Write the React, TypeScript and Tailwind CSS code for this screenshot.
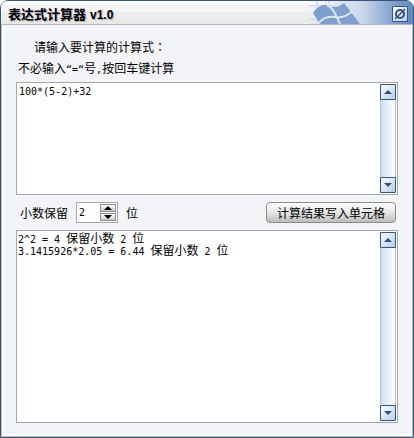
import { useState } from "react";
import type { ReactNode } from "react";

const RESULTS = [
  { expression: "2^2 = 4", digits: 2 },
  { expression: "3.1415926*2.05 = 6.44", digits: 2 },
];

const Mono = ({ children }: { children: ReactNode }) => (
  <span className="font-['DejaVu_Sans_Mono',monospace] text-[10px] whitespace-pre">
    {children}
  </span>
);

const Arrow = ({ down = false }: { down?: boolean }) => (
  <svg width="8" height="4" viewBox="0 0 8 4" fill="currentColor" aria-hidden="true">
    <path d={down ? "M0 0H8L4 4Z" : "M0 4H8L4 0Z"} />
  </svg>
);

const ScrollBar = ({ label }: { label: string }) => (
  <div className="flex w-4 shrink-0 flex-col justify-between border-x border-[#bcbfc4] bg-linear-to-r from-[#cfdff5] to-white">
    <button
      type="button"
      aria-label={`${label}向上滚动`}
      className="-mx-px flex h-4 items-center justify-center rounded-[1px] border border-[#36547c] bg-linear-to-br from-white to-[#b5cbe9] text-[#33517a]"
    >
      <Arrow />
    </button>
    <button
      type="button"
      aria-label={`${label}向下滚动`}
      className="-mx-px flex h-4 items-center justify-center rounded-[1px] border border-[#36547c] bg-linear-to-br from-white to-[#b5cbe9] text-[#33517a]"
    >
      <Arrow down />
    </button>
  </div>
);

const TitleBar = () => (
  <header className="relative flex h-6 shrink-0 items-center justify-between overflow-hidden rounded-t-md border-b border-[#b5b5b5] bg-[linear-gradient(#ffffff_0_4px,#f5f5f7_4px_11px,#ededee_11px_18px,#e8e8e5_18px)] pt-0.5 pr-[5px] pl-[7px]">
    <svg
      width="112"
      height="24"
      viewBox="301 1 112 24"
      className="absolute top-0 right-0"
      aria-hidden="true"
    >
      <defs>
        <linearGradient id="sky" x1="0" x2="1" y1="0" y2="0">
          <stop offset="0" stopColor="#eeeff2" stopOpacity="0" />
          <stop offset="0.3" stopColor="#e6eaf2" />
          <stop offset="0.55" stopColor="#cbd7ea" />
          <stop offset="0.8" stopColor="#86a4d0" />
          <stop offset="1" stopColor="#6189be" />
        </linearGradient>
      </defs>
      <rect x="301" y="1" width="112" height="24" fill="url(#sky)" />
      <path
        d="M309 6H352M309 19H352M317 1V24M329 1V24M341 1V24M352 1V24"
        stroke="#d6e0f0"
        strokeWidth="2"
        fill="none"
      />
      <path
        d="M313 13C317 7 322 4 327 5C333 8 339 8 344 3L360 24H320Z"
        fill="#7f9fcd"
      />
      <path
        d="M318 24C323 17 329 16 335 17C342 19 348 15 353 11M327 5C334 8 336 16 340 24"
        stroke="#dfe6f1"
        strokeWidth="2"
        fill="none"
      />
    </svg>
    <h1 className="flex items-baseline gap-1 font-bold text-black [text-shadow:1px_1px_1px_#aaaabb]">
      <span className="text-[13px]">表达式计算器</span>
      <span className="font-['Liberation_Sans',sans-serif] text-xs">v1.0</span>
    </h1>
    <button
      type="button"
      aria-label="关闭"
      className="relative flex size-4 items-center justify-center rounded-[1px] border border-[#36547c] bg-linear-to-br from-white to-[#b5cbe9] text-[#33517a]"
    >
      <svg width="12" height="12" viewBox="0 0 12 12" fill="none" stroke="currentColor" aria-hidden="true">
        <circle cx="6" cy="6" r="4" strokeWidth="2" />
        <path d="M1 11L11 1" strokeWidth="1.5" />
      </svg>
    </button>
  </header>
);

export default function App() {
  const [expression, setExpression] = useState("100*(5-2)+32");
  const [digits, setDigits] = useState(2);

  return (
    <div className="min-h-screen bg-white font-['Noto_Sans_CJK_SC',sans-serif] text-xs text-black">
      <main className="flex min-h-screen flex-col rounded-t-lg border border-[#36547c] bg-white">
        <TitleBar />
        <div className="flex flex-1 flex-col border-x border-b border-[#b9bdc2] bg-white px-0.5 pb-0.5">
          <div className="flex flex-1 flex-col bg-[#f3f4f7] px-3 pt-3 pb-[11px]">
            <label htmlFor="expression" className="block pl-0.5">
              <span className="block h-[21px] pl-4 leading-5">
                请输入要计算的计算式
                <span className="font-['Noto_Sans_CJK_TC',sans-serif]" lang="zh-TW">：</span>
              </span>
              <span className="block h-[21px] leading-5">
                不必输入<Mono>“=“</Mono>号<Mono>,</Mono>按回车键计算
              </span>
            </label>

            <div className="mt-[3px] flex h-[113px] border border-[#a0a8b0] bg-white p-px">
              <textarea
                id="expression"
                value={expression}
                onChange={(e) => setExpression(e.target.value)}
                className="min-w-0 flex-1 resize-none overflow-hidden px-px py-0.5 font-['DejaVu_Sans_Mono',monospace] text-[10px] leading-3 outline-none"
              />
              <ScrollBar label="计算式" />
            </div>

            <div className="flex h-[35px] items-center justify-between pl-1">
              <div className="flex items-center gap-2">
                <label htmlFor="digits">小数保留</label>
                <div className="flex h-[21px] w-[42px] items-stretch border border-[#a0a8b0] bg-white p-px">
                  <input
                    id="digits"
                    inputMode="numeric"
                    value={digits}
                    onChange={(e) => setDigits(Number(e.target.value) || 0)}
                    className="min-w-0 flex-1 pl-px font-['DejaVu_Sans_Mono',monospace] text-[10px] outline-none"
                  />
                  <div className="flex w-4 shrink-0 flex-col gap-px text-black">
                    <button
                      type="button"
                      aria-label="增加位数"
                      onClick={() => setDigits(digits + 1)}
                      className="flex flex-1 items-center justify-center border border-[#8f8f8f] bg-linear-to-b from-white to-[#c9c9c9]"
                    >
                      <Arrow />
                    </button>
                    <button
                      type="button"
                      aria-label="减少位数"
                      onClick={() => setDigits(Math.max(0, digits - 1))}
                      className="flex flex-1 items-center justify-center border border-[#8f8f8f] bg-linear-to-b from-white to-[#c9c9c9]"
                    >
                      <Arrow down />
                    </button>
                  </div>
                </div>
                <span>位</span>
              </div>
              <button
                type="button"
                className="mr-0.5 h-[21px] w-[130px] rounded-sm border border-[#8b8b8b] bg-linear-to-b from-white via-[#e6e6e6] to-[#bdbdbd] leading-4"
              >
                计算结果写入单元格
              </button>
            </div>

            <div className="flex flex-1 border border-[#a0a8b0] bg-white p-px">
              <output htmlFor="expression digits" className="min-w-0 flex-1">
                {RESULTS.map((r) => (
                  <span key={r.expression} className="block h-3 leading-3">
                    <Mono>{r.expression} </Mono>保留小数<Mono> {r.digits} </Mono>位
                  </span>
                ))}
              </output>
              <ScrollBar label="结果" />
            </div>
          </div>
        </div>
      </main>
    </div>
  );
}
